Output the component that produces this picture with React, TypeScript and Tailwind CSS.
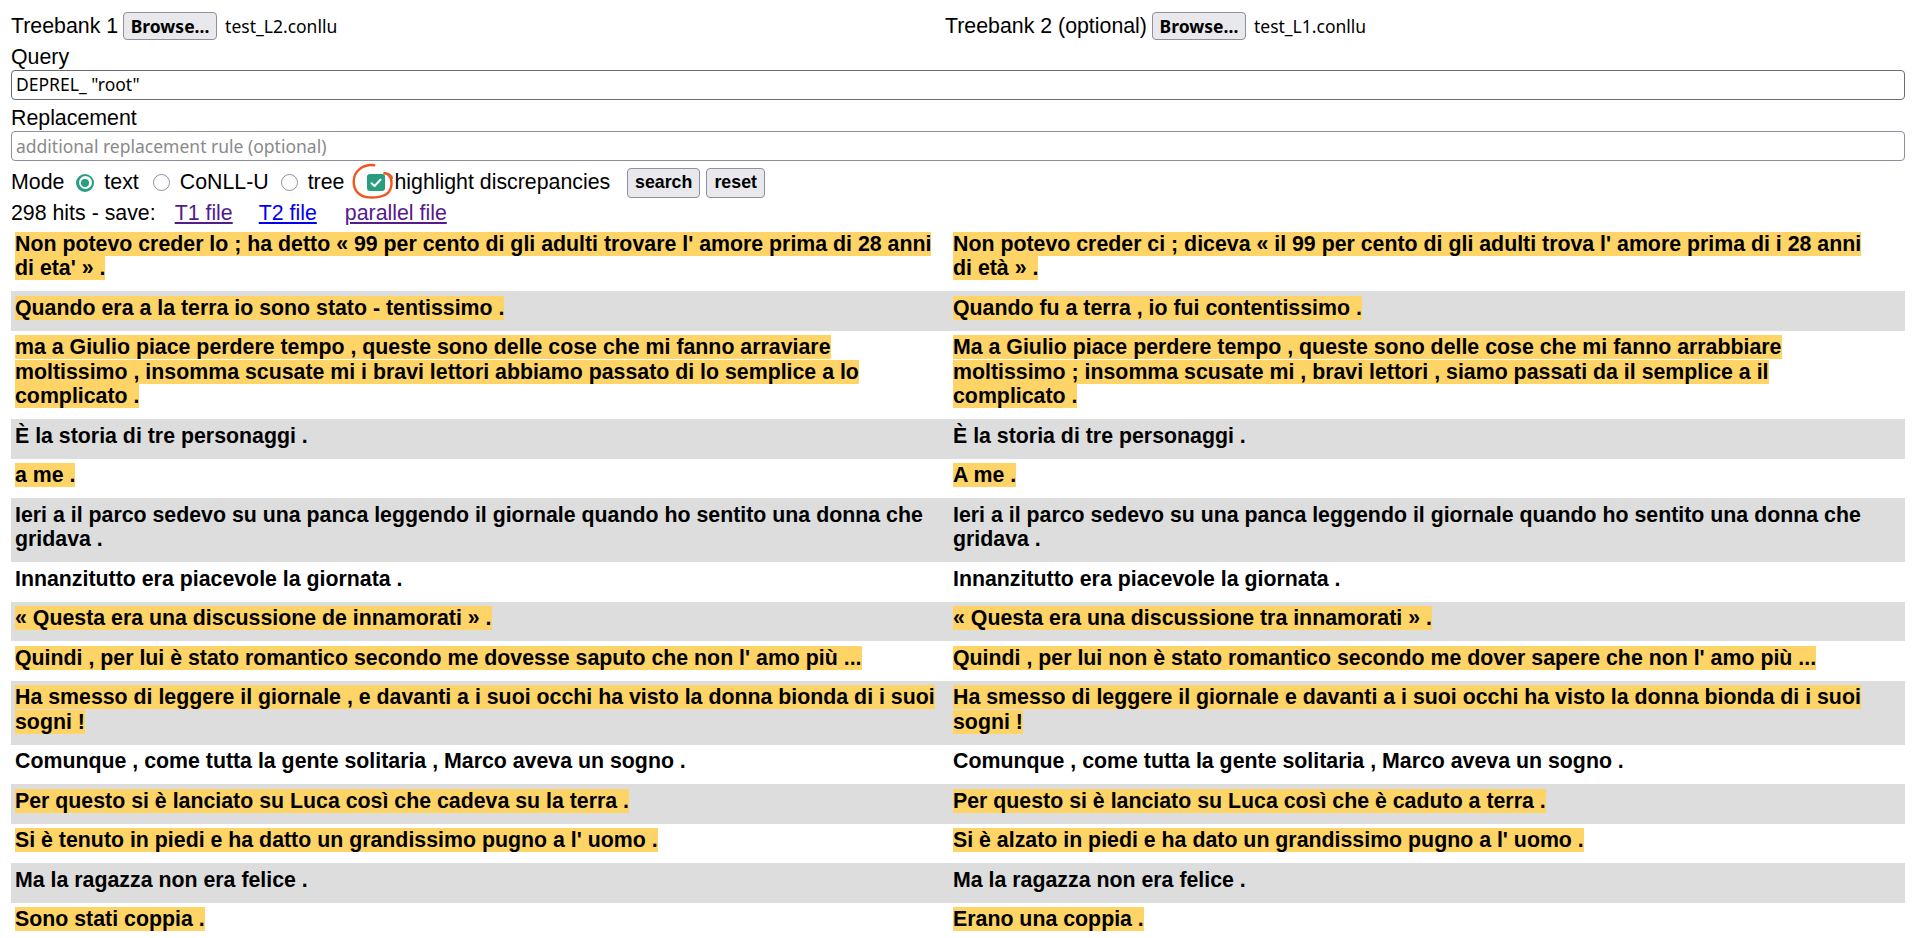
import React from "react";

type Row = [string, string, boolean];

const rows: Row[] = [
  [
    "Non potevo creder lo ; ha detto « 99 per cento di gli adulti trovare l' amore prima di 28 anni di eta' » .",
    "Non potevo creder ci ; diceva « il 99 per cento di gli adulti trova l' amore prima di i 28 anni di età » .",
    true,
  ],
  ["Quando era a la terra io sono stato - tentissimo .", "Quando fu a terra , io fui contentissimo .", true],
  [
    "ma a Giulio piace perdere tempo , queste sono delle cose che mi fanno arraviare moltissimo , insomma scusate mi i bravi lettori abbiamo passato di lo semplice a lo complicato .",
    "Ma a Giulio piace perdere tempo , queste sono delle cose che mi fanno arrabbiare moltissimo ; insomma scusate mi , bravi lettori , siamo passati da il semplice a il complicato .",
    true,
  ],
  ["È la storia di tre personaggi .", "È la storia di tre personaggi .", false],
  ["a me .", "A me .", true],
  [
    "Ieri a il parco sedevo su una panca leggendo il giornale quando ho sentito una donna che gridava .",
    "Ieri a il parco sedevo su una panca leggendo il giornale quando ho sentito una donna che gridava .",
    false,
  ],
  ["Innanzitutto era piacevole la giornata .", "Innanzitutto era piacevole la giornata .", false],
  ["« Questa era una discussione de innamorati » .", "« Questa era una discussione tra innamorati » .", true],
  [
    "Quindi , per lui è stato romantico secondo me dovesse saputo che non l' amo più ...",
    "Quindi , per lui non è stato romantico secondo me dover sapere che non l' amo più ...",
    true,
  ],
  [
    "Ha smesso di leggere il giornale , e davanti a i suoi occhi ha visto la donna bionda di i suoi sogni !",
    "Ha smesso di leggere il giornale e davanti a i suoi occhi ha visto la donna bionda di i suoi sogni !",
    true,
  ],
  [
    "Comunque , come tutta la gente solitaria , Marco aveva un sogno .",
    "Comunque , come tutta la gente solitaria , Marco aveva un sogno .",
    false,
  ],
  [
    "Per questo si è lanciato su Luca così che cadeva su la terra .",
    "Per questo si è lanciato su Luca così che è caduto a terra .",
    true,
  ],
  [
    "Si è tenuto in piedi e ha datto un grandissimo pugno a l' uomo .",
    "Si è alzato in piedi e ha dato un grandissimo pugno a l' uomo .",
    true,
  ],
  ["Ma la ragazza non era felice .", "Ma la ragazza non era felice .", false],
  ["Sono stati coppia .", "Erano una coppia .", true],
];

function FilePicker({ name }: { name: string }) {
  return (
    <>
      <span className="ml-[5px] flex h-[28px] w-[94px] items-center justify-center rounded-[4px] border border-[#8f8f9d] bg-[#e9e9ed] font-['Noto_Sans',sans-serif] text-[17.5px] font-bold">
        Browse…
      </span>
      <span className="ml-[8px] font-['Noto_Sans',sans-serif] text-[17.5px]">{name}</span>
    </>
  );
}

function Radio({ on }: { on?: boolean }) {
  if (on) {
    return (
      <span className="flex h-[18px] w-[18px] items-center justify-center rounded-full bg-[#2a9d80]">
        <span className="flex h-[13px] w-[13px] items-center justify-center rounded-full bg-white">
          <span className="block h-[8px] w-[8px] rounded-full bg-[#2a9d80]" />
        </span>
      </span>
    );
  }
  return <span className="block h-[17px] w-[17px] rounded-full border-[1.5px] border-[#8f8f9d] bg-white" />;
}

export default function App() {
  return (
    <div className="min-h-screen bg-white pl-[11px] pr-[15px] pt-[10px] font-['Liberation_Sans',Arial,sans-serif] text-[21.33px] leading-[24.5px] text-black">
      <div className="grid h-[32px] grid-cols-[934px_1fr]">
        <div className="flex items-center">
          <span>Treebank 1</span>
          <FilePicker name="test_L2.conllu" />
        </div>
        <div className="flex items-center">
          <span>Treebank 2 (optional)</span>
          <FilePicker name="test_L1.conllu" />
        </div>
      </div>

      <div className="mt-[3px]">Query</div>
      <div className="flex h-[30px] items-center rounded-[4px] border border-[#6b6b76] px-[4px] font-['Noto_Sans',sans-serif] text-[17.5px]">
        DEPREL_ "root"
      </div>

      <div className="mt-[6px]">Replacement</div>
      <div className="mt-[1px] flex h-[29.5px] items-center rounded-[4px] border border-[#8f8f9d] px-[4px] font-['Noto_Sans',sans-serif] text-[17.5px] text-[#8a8a8a]">
        additional replacement rule (optional)
      </div>

      <div className="mt-[7px] flex h-[30px] items-center">
        <span>Mode</span>
        <span className="ml-[12px]">
          <Radio on />
        </span>
        <span className="ml-[10px]">text</span>
        <span className="ml-[14px]">
          <Radio />
        </span>
        <span className="ml-[10px]">CoNLL-U</span>
        <span className="ml-[12px]">
          <Radio />
        </span>
        <span className="ml-[10px]">tree</span>
        <span className="relative ml-[23px] flex h-[17.5px] w-[17.5px] items-center justify-center rounded-[3px] bg-[#2a9d80]">
          <svg width="12" height="10" viewBox="0 0 12 10" fill="none">
            <path d="M1.5 5.2 L4.6 8 L10.5 1.8" stroke="white" strokeWidth="2" strokeLinecap="round" strokeLinejoin="round" />
          </svg>
          <svg
            className="absolute left-[-16px] top-[-13px] overflow-visible"
            width="44"
            height="40"
            viewBox="349.7 160 44 40"
            fill="none"
          >
            <path
              d="M373 164.2 C361.5 163 352.8 170 352.4 180.2 C352.1 189.5 358.2 196 368 196.4 C378 196.8 387.6 195 389.6 186.5 C391 181 390 176.5 386.8 173.6 C385.2 172.4 383.6 172.1 383 172.4 M383.2 172.2 C386.8 172.4 389.4 174 390.6 176.8"
              stroke="#f0561f"
              strokeWidth="2.4"
              strokeLinecap="round"
              strokeLinejoin="round"
            />
          </svg>
        </span>
        <span className="ml-[9.5px]">highlight discrepancies</span>
        <span className="ml-[17px] flex h-[30px] w-[73px] items-center justify-center rounded-[4px] border border-[#8f8f9d] bg-[#e9e9ed] text-[17.8px] font-bold">
          search
        </span>
        <span className="ml-[6px] flex h-[30px] w-[59px] items-center justify-center rounded-[4px] border border-[#8f8f9d] bg-[#e9e9ed] text-[17.8px] font-bold">
          reset
        </span>
      </div>

      <div className="mt-[3px] flex">
        <span>298 hits - save:</span>
        <a className="ml-[19px] text-[#551a8b] underline">T1 file</a>
        <a className="ml-[26px] text-[#0000ee] underline">T2 file</a>
        <a className="ml-[28px] text-[#551a8b] underline">parallel file</a>
      </div>

      <div className="mt-[2px] font-bold">
        {rows.map(([left, right, hl], i) => (
          <div
            key={i}
            className={`grid grid-cols-[938px_956px] ${i % 2 === 1 ? "bg-[#dddddd]" : "bg-white"}`}
          >
            <div className="pb-[10.5px] pl-[4px] pr-[4px] pt-[4.5px]">
              <span className={hl ? "bg-[#fed466]" : ""}>{left}</span>
            </div>
            <div className="pb-[10.5px] pl-[4px] pr-[28px] pt-[4.5px]">
              <span className={hl ? "bg-[#fed466]" : ""}>{right}</span>
            </div>
          </div>
        ))}
      </div>
    </div>
  );
}
